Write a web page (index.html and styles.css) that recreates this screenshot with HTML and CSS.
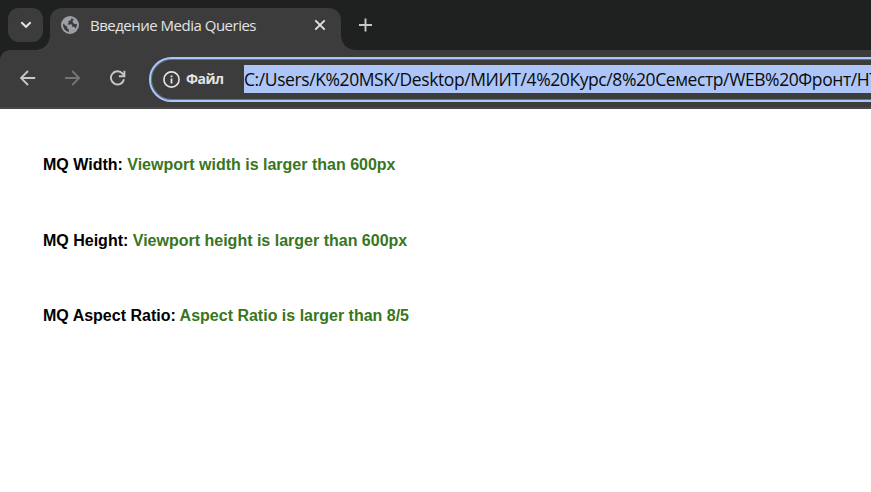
FILE: index.html
```html
<!DOCTYPE html>
<html lang="ru">
<head>
<meta charset="utf-8">
<title>Введение Media Queries</title>
<link rel="stylesheet" href="styles.css">
</head>
<body>
<header class="browser">
  <div class="tab-strip">
    <button class="tab-search" aria-label="Tabs"><svg width="12" height="8" viewBox="0 0 12 8"><path d="M1.3 1.3 6 5.8l4.7-4.5" fill="none" stroke="#e3e3e3" stroke-width="2"/></svg></button>
    <div class="tab">
      <svg class="globe" width="18" height="18" viewBox="0 0 18 18"><circle cx="9" cy="9" r="9" fill="#9aa0a6"/><path d="M10.5 2.2 9.8 4.2 7.5 5v2.2l-1.2 1.2h4.8v2.3H13l1.7 1.8A7 7 0 0 0 15.9 8h-2.3l-1.9-1.5V4.7l1.2-1.4ZM2.1 7.6A7 7 0 0 0 7.9 15.9v-2.4l-1.7-1v-1.8L2.1 7.6Z" fill="#3c3c3c"/></svg>
      <span class="tab-title">Введение Media Queries</span>
      <svg class="close" width="12" height="12" viewBox="0 0 12 12"><path d="m1.3 1.3 9.4 9.4m0-9.4-9.4 9.4" stroke="#e3e3e3" stroke-width="1.9"/></svg>
    </div>
    <svg class="plus" width="14" height="14" viewBox="0 0 14 14"><path d="M6.5 .5v13M0 7h13" stroke="#c7c7c7" stroke-width="1.9"/></svg>
  </div>
  <div class="toolbar">
    <svg class="nav" width="16" height="16" viewBox="0 0 16 16"><path d="M15.2 8H1.5M8 1 1 8l7 7" fill="none" stroke="#c7c7c7" stroke-width="1.8"/></svg>
    <svg class="nav" width="16" height="16" viewBox="0 0 16 16"><path d="M0 8h13.7M7.2 1l7 7-7 7" fill="none" stroke="#757575" stroke-width="1.8"/></svg>
    <svg class="nav" width="16" height="16" viewBox="0 0 16 16"><path d="M14 9.3A6.6 6.6 0 1 1 12.5 3.5L14.2 5.3" fill="none" stroke="#c7c7c7" stroke-width="1.9"/><path d="M14.4.7v5.6H8.9" fill="none" stroke="#c7c7c7" stroke-width="1.9"/></svg>
    <div class="omnibox">
      <svg class="info" width="17" height="17" viewBox="0 0 17 17"><circle cx="8.5" cy="8.5" r="7.6" fill="none" stroke="#e3e3e3" stroke-width="1.6"/><path d="M8.5 7.5v5M8.5 4.4v1.8" stroke="#e3e3e3" stroke-width="1.8"/></svg>
      <span class="scheme">Файл</span>
      <span class="url">C:/Users/K%20MSK/Desktop/МИИТ/4%20Курс/8%20Семестр/WEB%20Фронт/HT</span>
    </div>
  </div>
</header>
<main class="page">
  <p>MQ Width: <span>Viewport width is larger than 600px</span></p>
  <p>MQ Height: <span>Viewport height is larger than 600px</span></p>
  <p>MQ Aspect Ratio: <span>Aspect Ratio is larger than 8/5</span></p>
</main>
</body>
</html>
```
FILE: styles.css
```css
* { box-sizing: border-box; }
body { margin: 0; background: #fff; overflow: hidden; height: 492px; }
svg { display: block; flex: none; }
.browser { background: #1f2120; overflow: hidden; }
.tab-strip { display: flex; height: 50px; padding: 8px 0 0 8px; }
.tab-search {
  width: 35px; height: 34px; margin: 0 7px 0 0; padding: 0; border: 0;
  border-radius: 11px; background: #3c3c3c;
  display: flex; align-items: center; justify-content: center;
}
.tab {
  position: relative; width: 291px; height: 42px; padding: 0 15px 8px 11px;
  background: #3c3c3c; border-radius: 12px 12px 0 0;
  display: flex; align-items: center;
}
.tab::before, .tab::after {
  content: ""; position: absolute; bottom: 0; width: 14px; height: 14px;
}
.tab::before { left: -14px; background: radial-gradient(circle at 0 0, transparent 13.5px, #3c3c3c 14px); }
.tab::after { right: -14px; background: radial-gradient(circle at 100% 0, transparent 13.5px, #3c3c3c 14px); }
.tab-title {
  margin-left: 11px; color: #e3e3e3; white-space: nowrap;
  font: 15px/20px "Open Sans", "Noto Sans", sans-serif; letter-spacing: -0.5px;
}
.close { margin-left: auto; }
.plus { margin: 10px 0 0 18px; }
.toolbar {
  display: flex; align-items: center; height: 59px; padding: 0 0 0 20px;
  background: #3c3c3c; border-bottom: 2px solid #484848; border-radius: 10px 0 0 0;
}
.nav { margin: 0 29px 1px 0; }
.omnibox {
  display: flex; align-items: center; flex: none; width: 760px; height: 45px; margin: 1px 0 0 -6px;
  padding-left: 12px; border: 2px solid #a8c7fa; border-radius: 23px;
  box-shadow: inset 0 0 0 1px #66718a; background: #3c3c3c;
}
.scheme {
  flex: none; width: 58px; margin: 0 0 1px 6px; color: #e3e3e3;
  font: 700 14px/20px "Open Sans", "Noto Sans", sans-serif; letter-spacing: -0.5px;
}
.url {
  flex: none; width: 640px; height: 28px; background: #adc6f7; color: #0b0b0b; white-space: nowrap;
  font: 17.5px/29px "Open Sans", "Noto Sans", sans-serif; letter-spacing: -0.41px;
}
.page { padding: 47px 0 0 43px; font: bold 16px/18px "Liberation Sans", Arial, sans-serif; color: #000; }
.page p { margin: 0 0 57.5px; }
.page span { color: #38761d; }
```
